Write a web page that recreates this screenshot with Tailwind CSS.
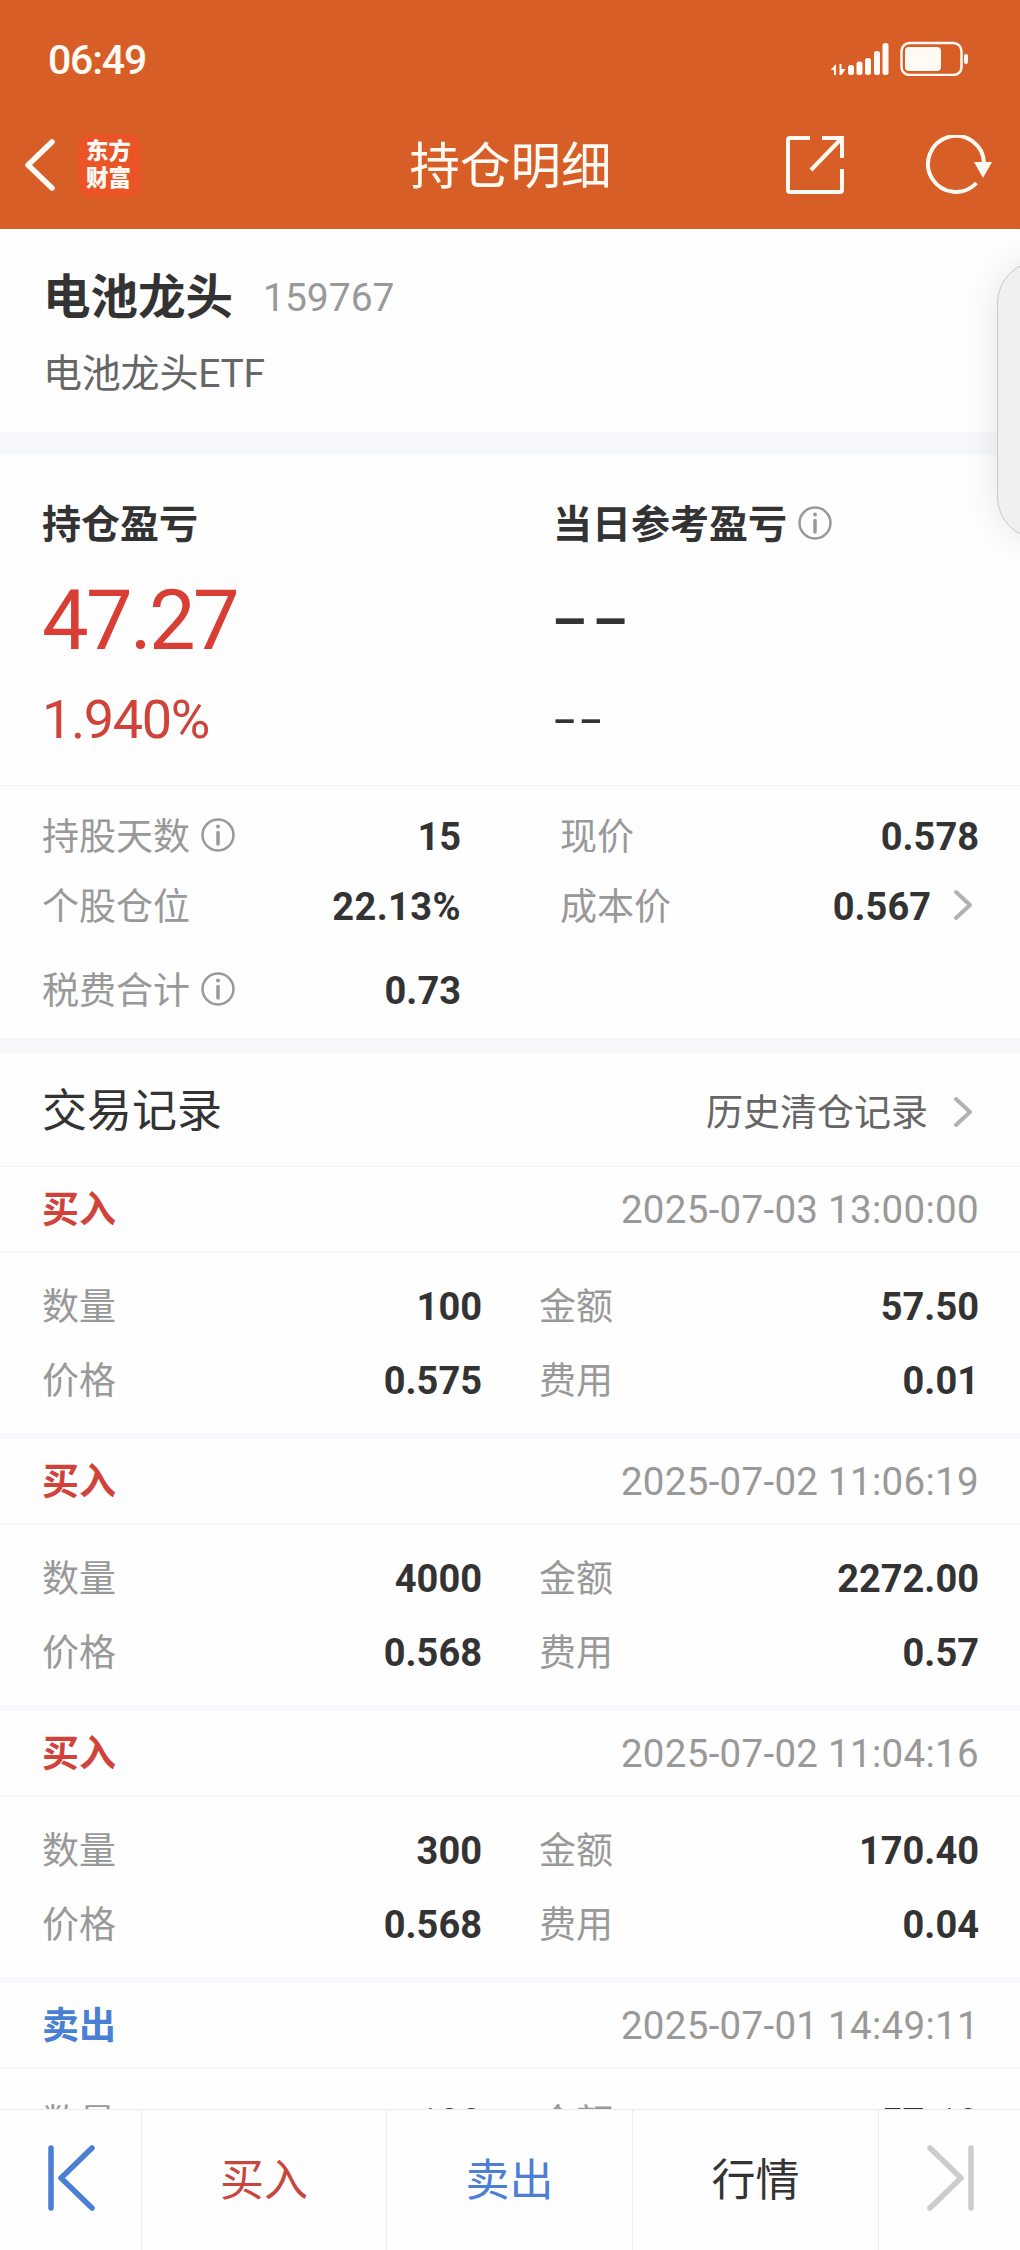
<!DOCTYPE html>
<html lang="zh-CN">
<head>
    <meta charset="UTF-8">
    <meta name="viewport" content="width=device-width, initial-scale=1.0">
    <title>持仓明细</title>
    <script src="https://cdn.jsdelivr.net/npm/@tailwindcss/browser@4"></script>
    <style>
        body {
            font-family: Roboto, "Noto Sans CJK SC", sans-serif;
        }
    </style>
</head>
<body class="bg-[#fefefe] text-[#333333]">
<div class="relative w-[1020px] h-[2250px] overflow-hidden flex flex-col">

    <!-- 顶部 -->
    <header class="h-[229px] shrink-0 bg-[#d75f27] text-[#fffaf3]">
        <div class="h-[118px] pl-12 pr-[49px] pt-[3px] flex items-center justify-between">
            <span class="text-[41px] font-medium leading-none tracking-[-1.2px]">06:49</span>
            <svg class="w-[140px] h-9 -mt-1.5" viewBox="0 0 140 36" fill="currentColor">
                <path d="M0 29.500 5 24v11H3v-5H0zM8.500 24h2v5h4l-4 6h-2z"/>
                <rect x="17" y="25" width="6" height="10" rx="2.500"/>
                <rect x="25.500" y="21.500" width="6" height="13.500" rx="2.500"/>
                <rect x="34" y="18" width="6" height="17" rx="2.500"/>
                <rect x="43" y="11" width="6" height="24" rx="2.500"/>
                <rect x="51.500" y="3" width="6" height="32" rx="2.500"/>
                <rect x="70.500" y="3" width="60" height="32" rx="8" fill="none" stroke="currentColor" stroke-width="2.500"/>
                <rect x="74" y="7" width="36" height="24" rx="4"/>
                <rect x="133" y="14" width="4" height="10" rx="2"/>
            </svg>
        </div>
        <div class="h-[94px] pl-6 pr-[27px] grid grid-cols-[1fr_auto_1fr] items-center">
            <div class="flex items-center gap-[22px]">
                <svg class="w-8 h-[52px]" viewBox="0 0 32 52" fill="none" stroke="currentColor" stroke-width="5.500" stroke-linecap="round" stroke-linejoin="round">
                    <path d="M28 3 4 26l24 23"/>
                </svg>
                <div class="w-[63px] h-[63px] pr-0.5 rounded-xl bg-[#ea5427] flex flex-col items-center justify-center text-[22.500px] leading-[27px] font-black">
                    <span>东方</span>
                    <span>财富</span>
                </div>
            </div>
            <h1 class="pt-1 pl-1 text-[50.500px] leading-[60px] text-center">持仓明细</h1>
            <div class="flex items-center justify-end gap-[71px]">
                <svg class="w-[60px] h-[60px] mr-[9px]" viewBox="0 0 60 60" fill="none" stroke="currentColor" stroke-width="4">
                    <path d="M25 3H5Q3 3 3 5v50q0 2 2 2h50q2 0 2-2V34"/>
                    <path d="M37 3h20v20M56 4 26 35"/>
                </svg>
                <svg class="w-[68px] h-[60px]" viewBox="0 0 68 60" fill="none" stroke="currentColor" stroke-width="4">
                    <path d="M51.500 48A28 28 0 1 1 59 28"/>
                    <path d="M49 27h18l-9 16z" fill="currentColor" stroke="none"/>
                </svg>
            </div>
        </div>
    </header>

    <!-- 证券名称 -->
    <section class="h-[203px] shrink-0 px-[43px] pt-[39px]">
        <div class="flex items-center gap-[30px]">
            <span class="text-[47.500px] leading-[60px] font-bold">电池龙头</span>
            <span class="text-[39px] leading-[60px] text-[#999999]">159767</span>
        </div>
        <div class="mt-4 text-[39px] leading-[60px] tracking-[-0.2px] text-[#666666]">电池龙头ETF</div>
    </section>
    <div class="h-[23px] shrink-0 bg-[#f6f8fb]"></div>

    <!-- 盈亏 -->
    <section class="h-[331px] shrink-0 pl-[42px] pr-[43px] pt-10 grid grid-cols-[511px_1fr] border-b border-[#f4f5f7]">
        <div>
            <div class="pt-px text-[39px] leading-[59px] font-bold">持仓盈亏</div>
            <div class="mt-4 text-[83px] leading-[100px] tracking-[-2.700px] text-[#d93e34]">47.27</div>
            <div class="mt-[17px] text-[54px] leading-[64px] tracking-[-1.400px] text-[#cf443a]">1.940%</div>
        </div>
        <div>
            <div class="flex items-center gap-[11px] text-[39px] leading-[59px] font-bold">
                <span class="pt-px">当日参考盈亏</span>
                <svg class="w-[34px] h-[34px] -mt-1" viewBox="0 0 34 34" fill="none" stroke="#999999" stroke-width="2.500">
                    <circle cx="17" cy="17" r="15.500"/>
                    <path d="M17 14.500V26" stroke-width="3.500" stroke-linecap="round"/>
                    <circle cx="17" cy="8.500" r="2" fill="#999999" stroke="none"/>
                </svg>
            </div>
            <div class="mt-3 -ml-1 font-[Inter] text-[92px] leading-[100px] font-light tracking-[-1px]">--</div>
            <div class="mt-[19px] -ml-0.5 font-[Inter] text-[60px] leading-[64px] font-light tracking-[-1px]">--</div>
        </div>
    </section>

    <!-- 持仓信息 -->
    <section class="h-[253px] shrink-0 pl-[42px] pr-[41px] pt-4 grid grid-cols-[419px_419px] grid-rows-[70px_70px_98px] gap-x-[99px] items-center text-[37px] border-b border-[#f4f5f7]">
        <div class="flex items-center justify-between">
            <div class="flex items-center gap-[11px] text-[#999999]">
                <span class="pt-0.5">持股天数</span>
                <svg class="w-[34px] h-[34px] -mt-1" viewBox="0 0 34 34" fill="none" stroke="currentColor" stroke-width="2.500">
                    <circle cx="17" cy="17" r="15.500"/>
                    <path d="M17 14.500V26" stroke-width="3.500" stroke-linecap="round"/>
                    <circle cx="17" cy="8.500" r="2" fill="currentColor" stroke="none"/>
                </svg>
            </div>
            <span class="text-[38px] font-bold">15</span>
        </div>
        <div class="flex items-center justify-between">
            <span class="pt-0.5 text-[#999999]">现价</span>
            <span class="text-[38px] font-bold">0.578</span>
        </div>
        <div class="flex items-center justify-between">
            <span class="pt-0.5 text-[#999999]">个股仓位</span>
            <span class="text-[38px] tracking-[0.400px] font-bold">22.13%</span>
        </div>
        <div class="flex items-center justify-between">
            <span class="pt-0.5 text-[#999999]">成本价</span>
            <div class="flex items-center gap-[22px] pr-1.5">
                <span class="text-[38px] font-bold">0.567</span>
                <svg class="w-5 h-8 -mt-1" viewBox="0 0 20 32" fill="none" stroke="#b1b1b1" stroke-width="4" stroke-linecap="round" stroke-linejoin="round">
                    <path d="m3 3 14 13L3 29"/>
                </svg>
            </div>
        </div>
        <div class="flex items-center justify-between">
            <div class="flex items-center gap-[11px] text-[#999999]">
                <span class="pt-0.5">税费合计</span>
                <svg class="w-[34px] h-[34px] -mt-1" viewBox="0 0 34 34" fill="none" stroke="currentColor" stroke-width="2.500">
                    <circle cx="17" cy="17" r="15.500"/>
                    <path d="M17 14.500V26" stroke-width="3.500" stroke-linecap="round"/>
                    <circle cx="17" cy="8.500" r="2" fill="currentColor" stroke="none"/>
                </svg>
            </div>
            <span class="text-[38px] font-bold">0.73</span>
        </div>
    </section>
    <div class="h-3.5 shrink-0 bg-[#f6f8fb]"></div>

    <!-- 交易记录 -->
    <section class="shrink-0">
        <div class="h-[114px] pl-[42px] pr-[47px] flex items-center justify-between border-b border-[#f4f5f7]">
            <h2 class="pt-1 text-[45px] leading-[60px]">交易记录</h2>
            <div class="flex items-center gap-[25px] pt-1">
                <span class="pt-1 text-[37px] leading-[50px] text-[#666666]">历史清仓记录</span>
                <svg class="w-5 h-8" viewBox="0 0 20 32" fill="none" stroke="#b1b1b1" stroke-width="4" stroke-linecap="round" stroke-linejoin="round">
                    <path d="m3 3 14 13L3 29"/>
                </svg>
            </div>
        </div>

        <article class="h-[272px] border-b-6 border-[#f6f8fb]">
            <div class="h-[85px] pl-[42px] pr-[41px] pt-0.5 flex items-center justify-between border-b border-[#f4f5f7]">
                <span class="pt-0.5 text-[37px] font-bold text-[#d1433a]">买入</span>
                <span class="text-[38.500px] tracking-[0.300px] text-[#999999]">2025-07-03 13:00:00</span>
            </div>
            <div class="pl-[42px] pr-[41px] pt-[18px] grid grid-cols-[440px_440px] auto-rows-[74px] gap-x-[57px] text-[37px]">
                <div class="flex items-center justify-between"><span class="pt-0.5 text-[#999999]">数量</span><span class="text-[38px] font-bold">100</span></div>
                <div class="flex items-center justify-between"><span class="pt-0.5 text-[#999999]">金额</span><span class="text-[38px] font-bold">57.50</span></div>
                <div class="flex items-center justify-between"><span class="pt-0.5 text-[#999999]">价格</span><span class="text-[38px] font-bold">0.575</span></div>
                <div class="flex items-center justify-between"><span class="pt-0.5 text-[#999999]">费用</span><span class="text-[38px] font-bold">0.01</span></div>
            </div>
        </article>

        <article class="h-[272px] border-b-6 border-[#f6f8fb]">
            <div class="h-[85px] pl-[42px] pr-[41px] pt-0.5 flex items-center justify-between border-b border-[#f4f5f7]">
                <span class="pt-0.5 text-[37px] font-bold text-[#d1433a]">买入</span>
                <span class="text-[38.500px] tracking-[0.300px] text-[#999999]">2025-07-02 11:06:19</span>
            </div>
            <div class="pl-[42px] pr-[41px] pt-[18px] grid grid-cols-[440px_440px] auto-rows-[74px] gap-x-[57px] text-[37px]">
                <div class="flex items-center justify-between"><span class="pt-0.5 text-[#999999]">数量</span><span class="text-[38px] font-bold">4000</span></div>
                <div class="flex items-center justify-between"><span class="pt-0.5 text-[#999999]">金额</span><span class="text-[38px] font-bold">2272.00</span></div>
                <div class="flex items-center justify-between"><span class="pt-0.5 text-[#999999]">价格</span><span class="text-[38px] font-bold">0.568</span></div>
                <div class="flex items-center justify-between"><span class="pt-0.5 text-[#999999]">费用</span><span class="text-[38px] font-bold">0.57</span></div>
            </div>
        </article>

        <article class="h-[272px] border-b-6 border-[#f6f8fb]">
            <div class="h-[85px] pl-[42px] pr-[41px] pt-0.5 flex items-center justify-between border-b border-[#f4f5f7]">
                <span class="pt-0.5 text-[37px] font-bold text-[#d1433a]">买入</span>
                <span class="text-[38.500px] tracking-[0.300px] text-[#999999]">2025-07-02 11:04:16</span>
            </div>
            <div class="pl-[42px] pr-[41px] pt-[18px] grid grid-cols-[440px_440px] auto-rows-[74px] gap-x-[57px] text-[37px]">
                <div class="flex items-center justify-between"><span class="pt-0.5 text-[#999999]">数量</span><span class="text-[38px] font-bold">300</span></div>
                <div class="flex items-center justify-between"><span class="pt-0.5 text-[#999999]">金额</span><span class="text-[38px] font-bold">170.40</span></div>
                <div class="flex items-center justify-between"><span class="pt-0.5 text-[#999999]">价格</span><span class="text-[38px] font-bold">0.568</span></div>
                <div class="flex items-center justify-between"><span class="pt-0.5 text-[#999999]">费用</span><span class="text-[38px] font-bold">0.04</span></div>
            </div>
        </article>

        <article class="h-[126px] overflow-hidden">
            <div class="h-[85px] pl-[42px] pr-[41px] pt-0.5 flex items-center justify-between border-b border-[#f4f5f7]">
                <span class="pt-0.5 text-[37px] font-bold text-[#4a7fd4]">卖出</span>
                <span class="text-[38.500px] tracking-[0.300px] text-[#999999]">2025-07-01 14:49:11</span>
            </div>
            <div class="pl-[42px] pr-[41px] pt-[18px] grid grid-cols-[440px_440px] auto-rows-[74px] gap-x-[57px] text-[37px]">
                <div class="flex items-center justify-between"><span class="pt-0.5 text-[#999999]">数量</span><span class="text-[38px] font-bold">100</span></div>
                <div class="flex items-center justify-between"><span class="pt-0.5 text-[#999999]">金额</span><span class="text-[38px] font-bold">57.10</span></div>
            </div>
        </article>
    </section>

    <!-- 底部操作栏 -->
    <nav class="h-[141px] shrink-0 grid grid-cols-[142px_245px_246px_246px_141px] border-t border-[#ebebeb] bg-[#fefefe] text-[44px] divide-x divide-[#ebebeb]">
        <div class="flex items-center justify-center pb-1">
            <svg class="w-12 h-[68px]" viewBox="0 0 48 68" fill="none" stroke="#4a7fd4" stroke-width="5.500" stroke-linecap="round" stroke-linejoin="round">
                <path d="M4 4v60M45 4 14 34l31 30"/>
            </svg>
        </div>
        <div class="flex items-center justify-center pt-0.5 text-[#c9463c]">买入</div>
        <div class="flex items-center justify-center pt-0.5 text-[#4a7fd4]">卖出</div>
        <div class="flex items-center justify-center pt-0.5">行情</div>
        <div class="flex items-center justify-center pb-1 pl-0.5">
            <svg class="w-12 h-[68px]" viewBox="0 0 48 68" fill="none" stroke="#cccccc" stroke-width="5.500" stroke-linecap="round" stroke-linejoin="round">
                <path d="m3 4 31 30L3 64M44 4v60"/>
            </svg>
        </div>
    </nav>

    <!-- 屏幕边缘悬浮窗 -->
    <div class="absolute left-[997px] top-[261px] w-24 h-[278px] rounded-[42px] border border-[#c8c8c8] bg-[#f0f0f0] shadow-[0_0_40px_rgba(0,0,0,0.1)]"></div>
</div>
</body>
</html>
